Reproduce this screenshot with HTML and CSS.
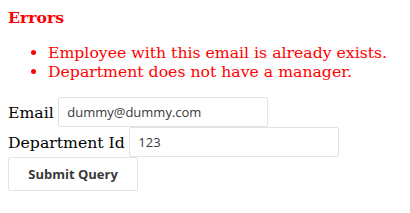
FILE: index.html
```html
<!DOCTYPE html>
<html lang="en">
<head>
    <meta charset="UTF-8">
    <title>Employee</title>
    <link rel="stylesheet" href="styles.css">
</head>
<body>
    <div class="errors">
        <h4 class="errors-title">Errors</h4>
        <ul class="errors-list">
            <li>Employee with this email is already exists.</li>
            <li>Department does not have a manager.</li>
        </ul>
    </div>
    <form class="form">
        <div class="row">
            <label for="email">Email</label>
            <input type="text" id="email" class="field" value="dummy@dummy.com">
        </div>
        <div class="row">
            <label for="dept">Department Id</label>
            <input type="text" id="dept" class="field" value="123">
        </div>
        <button type="button" class="submit">Submit Query</button>
    </form>
</body>
</html>
```

FILE: styles.css
```css
body {
    margin: 8px;
    font-family: "DejaVu Serif", serif;
    font-size: 15.7px;
    background-color: #fff;
}

.errors {
    color: red;
}

.errors-title {
    margin: 0;
    font-size: 15.7px;
    font-weight: bold;
}

.errors-list {
    margin: 16px 0;
    padding-left: 40px;
}

.form {
    margin: 0;
}

.row {
    display: flex;
    align-items: center;
    gap: 4.5px;
    height: 30px;
}

.row label {
    color: #000;
}

.field {
    box-sizing: border-box;
    width: 210px;
    height: 30px;
    padding: 0 8px;
    border: 1px solid #e3e3e3;
    border-radius: 2px;
    font-family: "Open Sans", sans-serif;
    font-size: 13px;
    color: #3a3a3a;
    background: #fff;
    outline: none;
}

.submit {
    box-sizing: border-box;
    width: 130px;
    height: 34px;
    margin-top: 0;
    background: #fff;
    border: 1px solid #e3e3e3;
    border-radius: 2px;
    font-family: "Open Sans", sans-serif;
    font-size: 13px;
    font-weight: bold;
    color: #3a3a3a;
    cursor: pointer;
}
```
